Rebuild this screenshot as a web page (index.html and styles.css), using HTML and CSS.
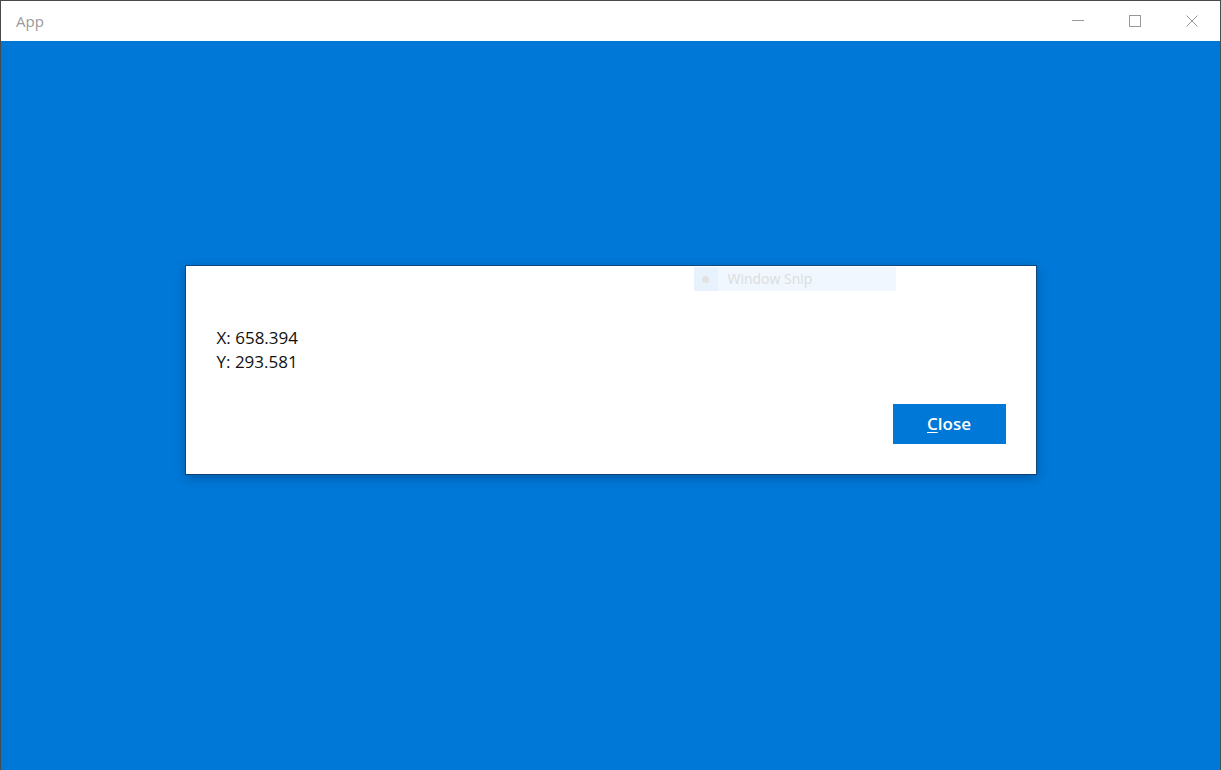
FILE: index.html
```html
<!DOCTYPE html>
<html lang="en">
<head>
<meta charset="utf-8">
<title>App</title>
<link rel="stylesheet" href="styles.css">
</head>
<body>
<div class="window">
  <header class="titlebar">
    <span class="title">App</span>
    <div class="caption-buttons">
      <button class="cap-btn" aria-label="Minimize">
        <svg width="12" height="12" viewBox="0 0 12 12"><path d="M0 5.5H12" stroke="#999" stroke-width="1" fill="none"/></svg>
      </button>
      <button class="cap-btn" aria-label="Maximize">
        <svg width="12" height="12" viewBox="0 0 12 12"><rect x="0.5" y="0.5" width="11" height="11" stroke="#999" stroke-width="1" fill="none"/></svg>
      </button>
      <button class="cap-btn" aria-label="Close">
        <svg width="12" height="12" viewBox="0 0 12 12"><path d="M0.5 0.5L11.5 11.5M11.5 0.5L0.5 11.5" stroke="#999" stroke-width="1" fill="none"/></svg>
      </button>
    </div>
  </header>
  <main class="content">
    <div class="dialog">
      <div class="snip-ghost">
        <span class="snip-icon"><span class="snip-dot"></span></span>
        <span class="snip-label">Window Snip</span>
      </div>
      <div class="dialog-body">
        <div class="line">X: 658.394</div>
        <div class="line">Y: 293.581</div>
      </div>
      <div class="dialog-actions">
        <button class="primary-btn"><u>C</u>lose</button>
      </div>
    </div>
  </main>
</div>
</body>
</html>
```
FILE: styles.css
```css
html, body {
  margin: 0;
  padding: 0;
  background: #ffffff;
}

body {
  font-family: "Segoe UI", "Open Sans", "Noto Sans", sans-serif;
}

.window {
  position: relative;
  width: 1221px;
  height: 770px;
  box-sizing: border-box;
  border-top: 1px solid #4a4a4a;
  border-left: 1px solid #4a4a4a;
  border-right: 1px solid #4a4a4a;
  display: flex;
  flex-direction: column;
  overflow: hidden;
}

.window::after {
  content: "";
  position: absolute;
  right: -1px;
  top: 212px;
  bottom: 0;
  width: 1px;
  background: #b8b8b8;
}

.titlebar {
  height: 40px;
  flex: 0 0 40px;
  background: #ffffff;
  display: flex;
  align-items: center;
  justify-content: space-between;
}

.title {
  padding-left: 15px;
  font-size: 15px;
  color: #9a9a9a;
  line-height: 40px;
}

.caption-buttons {
  display: flex;
  height: 40px;
}

.cap-btn {
  width: 57px;
  height: 40px;
  border: 0;
  padding: 0;
  margin: 0;
  background: transparent;
  display: flex;
  align-items: center;
  justify-content: center;
}

.cap-btn svg {
  display: block;
}

.content {
  flex: 1;
  background: #0078d7;
  display: flex;
  flex-direction: column;
  align-items: center;
  padding-top: 225px;
}

.dialog {
  position: relative;
  width: 850px;
  height: 208px;
  box-sizing: border-box;
  background: #ffffff;
  padding: 60px 30px 30px 31px;
  display: flex;
  flex-direction: column;
  box-shadow: 0 0 0 1px rgba(20, 40, 70, 0.55), 0 3px 10px rgba(0, 20, 50, 0.35);
}

.snip-ghost {
  position: absolute;
  left: 508px;
  top: 1px;
  width: 202px;
  height: 24px;
  background: #f0f7fe;
  display: flex;
  align-items: center;
}

.snip-icon {
  width: 24px;
  height: 24px;
  background: #e8f2fc;
  display: flex;
  align-items: center;
  justify-content: center;
}

.snip-dot {
  width: 7px;
  height: 7px;
  border-radius: 50%;
  background: #e2e2e2;
}

.snip-label {
  margin-left: 10px;
  font-size: 14px;
  color: #dcdcdc;
  line-height: 24px;
}

.dialog-body {
  font-size: 17px;
  line-height: 24px;
  color: #111111;
}

.dialog-actions {
  margin-top: 30px;
  display: flex;
  justify-content: flex-end;
}

.primary-btn {
  width: 113px;
  height: 40px;
  border: 0;
  padding: 0;
  background: #0078d7;
  color: #ffffff;
  font-family: "Segoe UI", "Open Sans", "Noto Sans", sans-serif;
  font-size: 17px;
  font-weight: 600;
  line-height: 40px;
}

.primary-btn u {
  text-decoration-thickness: 1px;
  text-underline-offset: 2px;
}
```
